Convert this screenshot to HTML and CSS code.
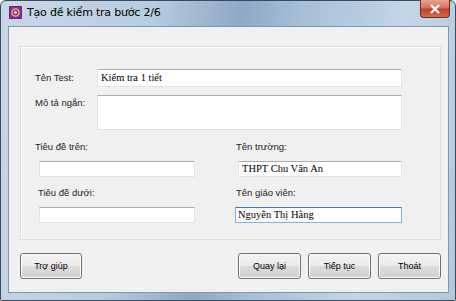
FILE: index.html
```html
<!DOCTYPE html>
<html>
<head>
<meta http-equiv="Content-Type" content="text/html; charset=utf-8"/>
<title>Tạo đề kiểm tra bước 2/6</title>
<link rel="stylesheet" href="styles.css">
</head>
<body>
<div class="window">
  <div class="titlebar">
    <svg class="app-icon" width="13" height="13" viewBox="0 0 13 13">
      <rect x="0" y="0" width="13" height="13" rx="1" fill="#6a1a7a"/>
      <rect x="1" y="1" width="11" height="11" fill="#8d2b9c"/>
      <circle cx="6.5" cy="6.5" r="3.6" fill="none" stroke="#f0c040" stroke-width="1.4"/>
      <circle cx="6.5" cy="6.5" r="1.4" fill="#e0e0ff"/>
    </svg>
    <span class="title">Tạo đề kiểm tra bước 2/6</span>
    <div class="close">
      <svg width="12" height="10" viewBox="0 0 12 10">
        <path d="M2 1 L10 9 M10 1 L2 9" stroke="#fff" stroke-width="2.2" fill="none"/>
      </svg>
    </div>
  </div>

  <div class="client">
    <div class="group">
      <div class="row row-name">
        <label class="lbl">Tên Test:</label>
        <div class="field serif">Kiểm tra 1 tiết</div>
      </div>
      <div class="row row-desc">
        <label class="lbl">Mô tả ngắn:</label>
        <div class="field area"></div>
      </div>
      <div class="cols">
        <div class="col col-left">
          <label class="lbl">Tiêu đề trên:</label>
          <div class="field small first ind"></div>
          <label class="lbl ind-l">Tiêu đề dưới:</label>
          <div class="field small ind"></div>
        </div>
        <div class="col col-right">
          <label class="lbl">Tên trường:</label>
          <div class="field small first serif ind-r">THPT Chu Văn An</div>
          <label class="lbl">Tên giáo viên:</label>
          <div class="field small serif focus">Nguyễn Thị Hằng</div>
        </div>
      </div>
    </div>

    <div class="buttons">
      <button class="btn">Trợ giúp</button>
      <div class="spacer"></div>
      <button class="btn">Quay lại</button>
      <button class="btn">Tiếp tục</button>
      <button class="btn">Thoát</button>
    </div>
  </div>
</div>
</body>
</html>
```

FILE: styles.css
```css
body {
   margin: 0;
   background-color: white;
   font-family: "Liberation Sans", Arial, sans-serif;
}

.window {
   width: 456px;
   height: 301px;
   box-sizing: border-box;
   border: 1px solid #3d4a58;
   border-radius: 6px 6px 2px 2px;
   background: linear-gradient(100deg, #c8d7e6 0%, #b9cce0 30%, #8ea8c6 48%, #a7bfd8 60%, #c4d5e6 80%, #b3c8dd 100%);
   padding: 0 6px 7px 7px;
   display: flex;
   flex-direction: column;
}

.titlebar {
   height: 25px;
   display: flex;
   align-items: center;
   position: relative;
}

.app-icon {
   margin-left: 1px;
   margin-top: -2px;
}

.title {
   margin-left: 5px;
   margin-top: -2px;
   font-family: "DejaVu Sans", sans-serif;
   font-size: 11px;
   color: #000;
   letter-spacing: -0.2px;
}

.close {
   position: absolute;
   right: -1px;
   top: -1px;
   width: 30px;
   height: 18px;
   box-sizing: border-box;
   border: 1px solid #6b2a22;
   border-top: none;
   border-radius: 0 0 4px 4px;
   background: linear-gradient(#e8a392 0%, #d6735f 45%, #c0402a 55%, #d66a4e 100%);
   display: flex;
   align-items: center;
   justify-content: center;
}

.client {
   flex: 1;
   background: #f0f0f0;
   border: 1px solid #8496aa;
   display: flex;
   flex-direction: column;
   padding: 19px 7px 0 11px;
}

.group {
   height: 194px;
   box-sizing: border-box;
   border: 1px solid #dcdcdc;
   box-shadow: inset 1px 1px 0 #fff;
   padding: 22px 0 0 14px;
}

.lbl {
   display: block;
   font-size: 9.5px;
   line-height: 12px;
   height: 12px;
   color: #222;
}

.row {
   display: flex;
   align-items: flex-start;
}

.row .lbl {
   width: 62px;
   flex: none;
   margin-top: 3px;
}

.field {
   box-sizing: border-box;
   background: #fff;
   border: 1px solid #e2e3ea;
   border-top-color: #abadb3;
   height: 18px;
   width: 305px;
   font-size: 10.5px;
   line-height: 14px;
   padding: 1px 3px;
   color: #000;
   white-space: nowrap;
}

.serif {
   font-family: "Liberation Serif", "Times New Roman", serif;
}

.row-desc {
   margin-top: 8px;
}

.row-desc .lbl {
   margin-top: 2px;
}

.area {
   height: 35px;
}

.cols {
   display: flex;
   margin-top: 11px;
}

.col {
   display: flex;
   flex-direction: column;
}

.col-left {
   width: 200px;
}

.col-right {
   width: 170px;
}

.col-right .lbl {
   margin-left: 1px;
}

.field.small {
   width: 156px;
   height: 16px;
   line-height: 13px;
   padding-top: 0;
   margin-top: 8px;
}

.field.small.first {
   margin-bottom: 10px;
}

.col-right .field.small {
   width: 167px;
}

.ind {
   margin-left: 4px;
}

.ind-l {
   margin-left: 3px;
}

.col-right .field.small.ind-r {
   margin-left: 3px;
   width: 164px;
}

.focus {
   border-color: #7eb4ea;
   border-top-color: #3d7bad;
   padding-left: 2px;
}

.buttons {
   display: flex;
   gap: 7px;
   margin-top: 13px;
}

.spacer {
   flex: 1;
}

.btn {
   width: 63px;
   height: 26px;
   font-family: "Liberation Sans", Arial, sans-serif;
   font-size: 9px;
   color: #000;
   border: 1px solid #707070;
   border-radius: 3px;
   background: linear-gradient(#f2f2f2 0%, #ebebeb 50%, #dddddd 51%, #cfcfcf 100%);
   box-shadow: inset 0 0 0 1px #fcfcfc;
   padding: 0;
}

.btn:first-child {
   width: 62px;
}
```
